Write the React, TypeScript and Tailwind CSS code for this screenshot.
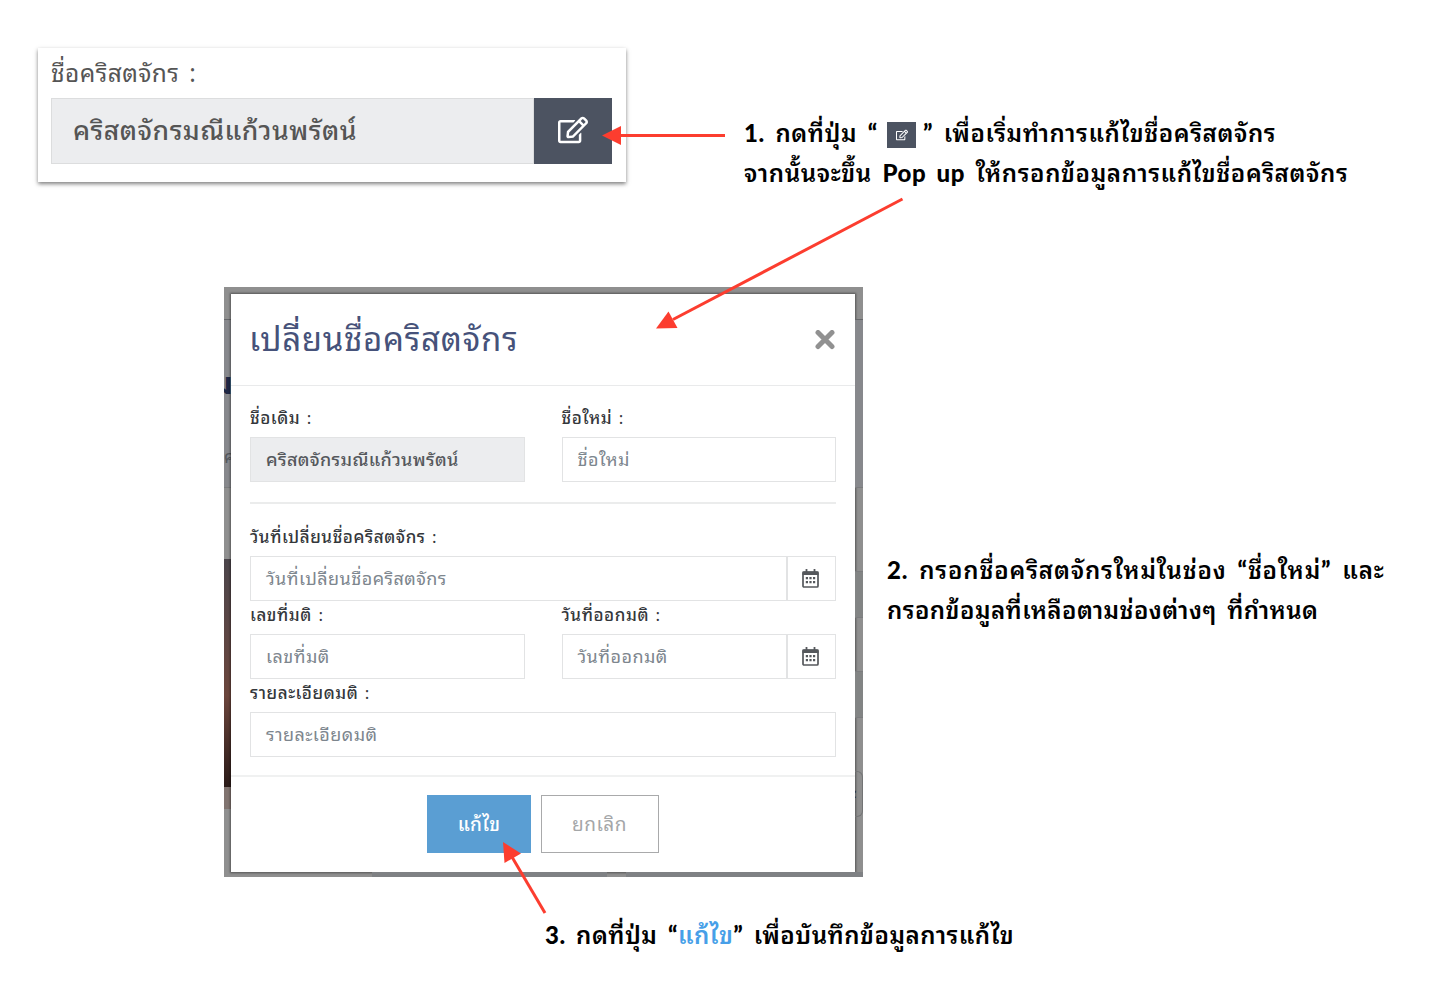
import React from "react";
import { FaRegEdit } from "react-icons/fa";

function Line({ className, children }: { className: string; children: React.ReactNode }) {
  return <div className={`w-max whitespace-nowrap ${className}`}>{children}</div>;
}

function CalendarIcon() {
  return (
    <svg className="mr-[2px] mt-px" width="17" height="19" viewBox="0 0 17 19">
      <path d="M4.500 0v3M12.500 0v3" stroke="#55585c" strokeWidth="1.8" />
      <rect x="1" y="3" width="15" height="15" rx="1" fill="none" stroke="#55585c" strokeWidth="1.7" />
      <path d="M0.500 2.500h16v3.500h-16z" fill="#55585c" />
      <path
        d="M3.800 8h2.200v2.200H3.800zM7.400 8h2.200v2.200H7.400zM11 8h2.200v2.200H11zM3.800 12h2.200v2.200H3.800zM7.400 12h2.200v2.200H7.400zM11 12h2.200v2.200H11z"
        fill="#55585c"
      />
    </svg>
  );
}

function Label({ children }: { children: React.ReactNode }) {
  return (
    <Line className="h-[33px] text-[17px] leading-[26px] font-medium tracking-[0.55px] text-[#34373b]">
      {children}
      <span className="ml-[6.5px] font-normal">:</span>
    </Line>
  );
}

function Field({ value, filled, calendar }: { value: string; filled?: boolean; calendar?: boolean }) {
  return (
    <div
      className={`flex h-[45px] items-stretch border-[1.5px] border-[#e2e3e4] ${filled ? "bg-[#ecedef]" : "bg-white"}`}
    >
      <div className="flex flex-1 items-center pb-[3px] pl-[15px]">
        <Line
          className={`text-[18px] leading-[30px] ${filled ? "font-medium tracking-[0.33px] text-[#55585c]" : "tracking-[0.45px] text-[#7d868e]"}`}
        >
          {value}
        </Line>
      </div>
      {calendar && (
        <div className="flex w-[49px] items-center justify-center border-l-2 border-[#e2e3e4]">
          <CalendarIcon />
        </div>
      )}
    </div>
  );
}

function Dialog() {
  return (
    <div className="flex h-[578px] w-[624px] flex-col bg-white shadow-[0_0_2px_1px_rgba(0,0,0,0.4)]">
      <div className="flex h-[92px] items-center justify-between border-b border-[#e9eaeb] pr-[20px] pl-[18px]">
        <Line className="pb-[5px] text-[33px] leading-[50px] tracking-[0.7px] text-[#46527a]">เปลี่ยนชื่อคริสตจักร</Line>
        <svg width="20" height="20" viewBox="0 0 20 20">
          <path d="M3 2.500l14 14M17 2.500L3 16.500" stroke="#919191" strokeWidth="5" strokeLinecap="round" />
        </svg>
      </div>
      <div className="flex h-[389px] flex-col px-[19px] pt-[18px]">
        <div className="grid grid-cols-2 gap-x-[37px]">
          <div>
            <Label>ชื่อเดิม</Label>
            <Field value="คริสตจักรมณีแก้วนพรัตน์" filled />
          </div>
          <div>
            <Label>ชื่อใหม่</Label>
            <Field value="ชื่อใหม่" />
          </div>
        </div>
        <div className="mt-[20px] h-[1.5px] bg-[#ebecec]" />
        <div className="pt-[19px]">
          <Label>วันที่เปลี่ยนชื่อคริสตจักร</Label>
          <Field value="วันที่เปลี่ยนชื่อคริสตจักร" calendar />
        </div>
        <div className="grid grid-cols-2 gap-x-[37px]">
          <div>
            <Label>เลขที่มติ</Label>
            <Field value="เลขที่มติ" />
          </div>
          <div>
            <Label>วันที่ออกมติ</Label>
            <Field value="วันที่ออกมติ" calendar />
          </div>
        </div>
        <Label>รายละเอียดมติ</Label>
        <Field value="รายละเอียดมติ" />
      </div>
      <div className="flex flex-1 justify-center gap-[10px] border-t-2 border-[#f0f1f1] pt-[18px]">
        <div className="flex h-[58px] w-[104px] items-center justify-center bg-[#5a9ed3] pb-[3px]">
          <Line className="text-[19px] leading-[30px] font-medium tracking-[0.3px] text-white">แก้ไข</Line>
        </div>
        <div className="flex h-[58px] w-[118px] items-center justify-center border-[1.5px] border-[#a9aaab] pr-px pb-[3px]">
          <Line className="text-[19px] leading-[30px] tracking-[0.5px] text-[#a4a6a8]">ยกเลิก</Line>
        </div>
      </div>
    </div>
  );
}

function Arrows() {
  return (
    <svg className="pointer-events-none absolute top-0 left-0" width="1440" height="997" viewBox="0 0 1440 997">
      <g stroke="#fc3d2f" strokeWidth="3" fill="#fc3d2f">
        <path d="M725 135.500H620" />
        <path d="M902.500 199L673 319.500" />
        <path d="M545 913L512 857" />
        <g stroke="none">
          <path d="M602 135.500L621 126v19z" />
          <path d="M656 328.500L668.500 311.500L677.500 328z" />
          <path d="M503 842L521 853.500L504.500 863z" />
        </g>
      </g>
    </svg>
  );
}

const THAI =
  '"Noto Sans Thai Looped", "Noto Looped Thai", Sarabun, Loma, Umpush, Waree, Garuda, Laksaman, "Noto Sans Thai", "Noto Sans", sans-serif';
const NOTE = { fontFamily: `Lato, ${THAI}` };

export default function App() {
  return (
    <main
      className="relative flex h-[997px] w-[1440px] flex-col overflow-hidden bg-white"
      style={{ fontFamily: THAI }}
    >
      <section className="flex h-[287px] pt-[48px] pl-[38px]">
        <div className="flex h-[134px] w-[588px] flex-col bg-white pl-[13px] shadow-[0_2px_4px_rgba(0,0,0,0.5)]">
          <Line className="h-[50px] text-[24.5px] leading-[46px] tracking-[0.4px] text-[#555555]">
            ชื่อคริสตจักร<span className="ml-[10px]">:</span>
          </Line>
          <div className="flex h-[66px] w-[561px]">
            <div className="flex w-[483px] items-center border-[1.5px] border-[#dcddde] bg-[#ecedef] pb-[6px] pl-[21px]">
              <Line className="text-[26.5px] leading-[44px] font-medium tracking-[0.5px] text-[#555555]">
                คริสตจักรมณีแก้วนพรัตน์
              </Line>
            </div>
            <div className="flex w-[78px] items-center justify-center bg-[#4c5361] pb-[2px]">
              <FaRegEdit size={30} color="#fff" />
            </div>
          </div>
        </div>
        <div
          className="pt-[65px] pl-[118px] text-[24px] leading-[40px] font-semibold tracking-[0.6px] text-black [word-spacing:4px]"
          style={NOTE}
        >
          <div className="flex h-[40px] items-center whitespace-nowrap">
            <span className="w-[134px]">
              <b>1.</b> กดที่ปุ่ม <b>“</b>
            </span>
            <span className="mt-[3px] mr-[7px] ml-[9px] flex h-[26px] w-[29px] items-center justify-center bg-[#4c5361]">
              <FaRegEdit size={12} color="#fff" />
            </span>
            <span>
              <b>”</b> เพื่อเริ่มทำการแก้ไขชื่อคริสตจักร
            </span>
          </div>
          <Line className="">
            จากนั้นจะขึ้น <b>Pop up</b> ให้กรอกข้อมูลการแก้ไขชื่อคริสตจักร
          </Line>
        </div>
      </section>

      <section className="flex h-[590px] pl-[224px]">
        <div className="flex h-[590px] w-[639px] flex-col bg-[#8f8f8f]">
          <div className="h-[7px]" />
          <div className="flex h-[578px]">
            <div className="flex w-[7px] flex-col overflow-hidden">
              <div className="h-[26px] border-b border-[#66676a]" />
              <div className="h-[168px] border-b border-[#7b7c7e] bg-[#87888c]">
                <Line className="pt-[39px] ml-[-11px] text-[30px] leading-[44px] font-bold text-[#1e2744]">ม</Line>
                <Line className="pt-[34px] text-[18px] leading-[36px] text-[#55585c]">ค</Line>
              </div>
              <div className="h-[71px]" />
              <div className="h-[228px] bg-linear-to-b from-[#4b454b] via-[#6b453c] via-60% to-[#2b1b18]" />
              <div className="h-[22px] bg-[#817470]" />
            </div>
            <Dialog />
            <div className="flex w-[8px] flex-col overflow-hidden">
              <div className="h-[26px] border-b border-[#66676a]" />
              <div className="h-[168px] border-b border-[#7b7c7e] bg-[#87888c]" />
              <div className="h-[84px] border-b border-[#7b7c7e]" />
              <div className="h-[46px] border-b border-[#7b7c7e] bg-[#828484]" />
              <div className="h-[54px] border-b border-[#7b7c7e]" />
              <div className="h-[46px] border-b border-[#7b7c7e] bg-[#828484]" />
              <div className="mt-[53px] h-[46px] rounded-r-[6px] border border-l-0 border-[#737475]">
                <Line className="ml-[-6px] text-[18px] leading-[38px] text-[#222222]">ะ</Line>
              </div>
            </div>
          </div>
          <div className="flex h-[5px] pl-[148px]">
            <div className="w-[235px] bg-[#7f8184]" />
            <div className="ml-[19px] flex-1 bg-[#7f8184]" />
          </div>
        </div>
        <div className="pt-[263px] pl-[24px] text-[24px] leading-[40px] font-semibold text-black" style={NOTE}>
          <Line className="tracking-[0.86px] [word-spacing:4px]">
            <b>2.</b> กรอกชื่อคริสตจักรใหม่ในช่อง <b>“</b>ชื่อใหม่<b>”</b> และ
          </Line>
          <Line className="tracking-[0.45px] [word-spacing:4px]">กรอกข้อมูลที่เหลือตามช่องต่างๆ ที่กำหนด</Line>
        </div>
      </section>

      <section className="pt-[38px] pl-[545px] text-[24px] leading-[40px] font-semibold text-black" style={NOTE}>
        <Line className="tracking-[0.5px] [word-spacing:4px]">
          <b>3.</b> กดที่ปุ่ม <b>“</b>
          <span className="text-[#479fe8]">แก้ไข</span>
          <b>”</b> เพื่อบันทึกข้อมูลการแก้ไข
        </Line>
      </section>
      <Arrows />
    </main>
  );
}
